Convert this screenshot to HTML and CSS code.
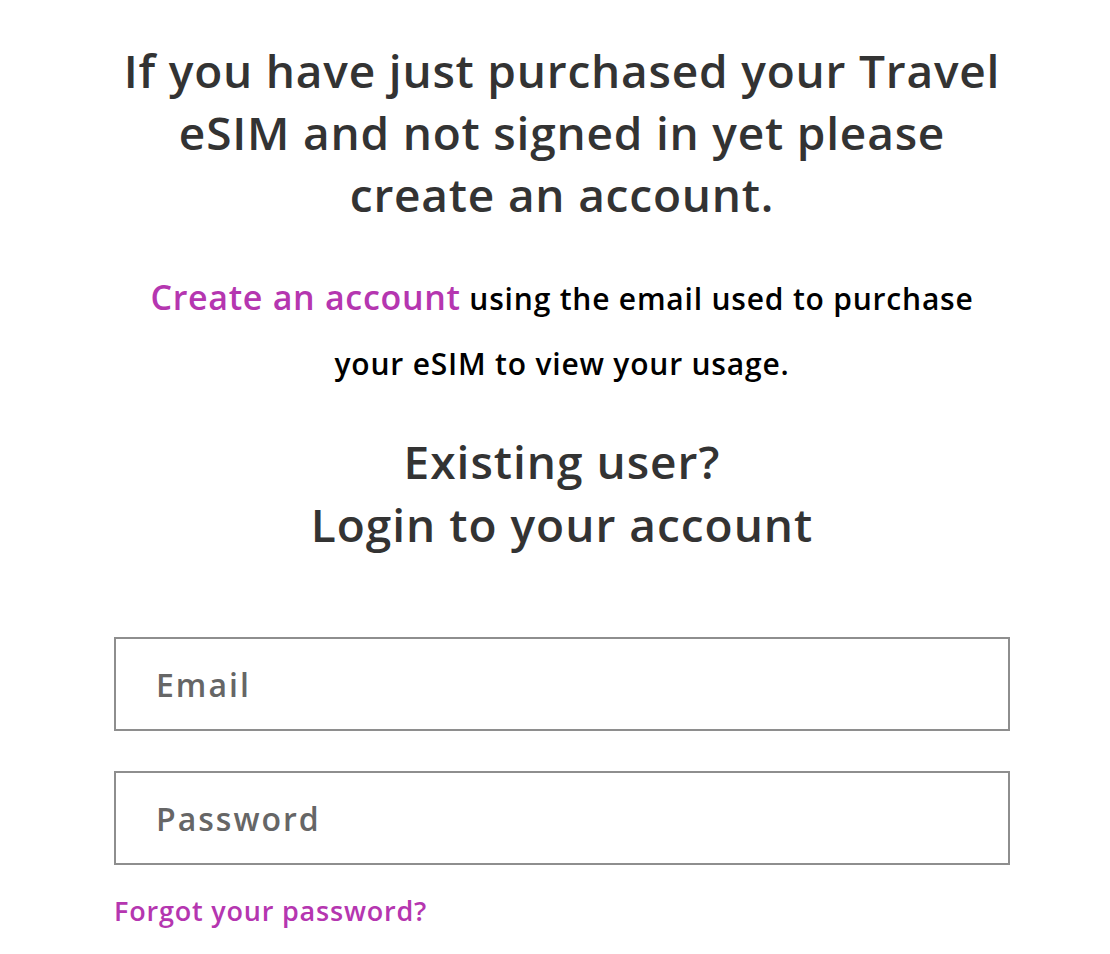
FILE: index.html
```html
<!DOCTYPE html>
<html lang="en">
<head>
  <meta charset="UTF-8">
  <meta name="viewport" content="width=device-width, initial-scale=1.0">
  <title>Login</title>
  <link rel="stylesheet" href="styles.css">
</head>
<body>
  <div class="login">
    <h2 class="intro">If you have just purchased your Travel eSIM and not signed in yet please create an account.</h2>
    <p class="note"><a href="#" class="create">Create an account</a> using the email used to purchase your eSIM to view your usage.</p>
    <h2 class="existing">Existing user?<br>Login to your account</h2>
    <form class="form">
      <input type="email" class="field" placeholder="Email">
      <input type="password" class="field" placeholder="Password">
      <a href="#" class="forgot">Forgot your password?</a>
    </form>
  </div>
</body>
</html>
```

FILE: styles.css
```css
body {
  margin: 0;
  font-family: "Open Sans", Lato, sans-serif;
  background-color: #fff;
  color: #333;
}

.login {
  width: 896px;
  margin-left: 114px;
  text-align: center;
}

.intro {
  margin: 39px 0 0;
  font-size: 46px;
  line-height: 62px;
  font-weight: 600;
  letter-spacing: 0.8px;
  color: #333;
}

.note {
  margin: 40px 0 0;
  padding: 0 30px;
  font-size: 30px;
  line-height: 65px;
  font-weight: 600;
  letter-spacing: 0.8px;
  color: #000;
}

.note .create {
  font-size: 34px;
  letter-spacing: 0.7px;
  color: #b536b0;
  text-decoration: none;
}

.existing {
  margin: 34px 0 0;
  font-size: 46px;
  line-height: 63px;
  font-weight: 600;
  letter-spacing: 1px;
  color: #333;
}

.form {
  display: flex;
  flex-direction: column;
  align-items: flex-start;
  margin-top: 81px;
}

.field {
  width: 100%;
  height: 94px;
  box-sizing: border-box;
  margin-bottom: 40px;
  padding: 0 40px;
  border: 2px solid #8e8e8e;
  border-radius: 0;
  font-family: inherit;
  font-size: 32px;
  letter-spacing: 2px;
  color: #333;
  outline: none;
}

.field + .field {
  margin-bottom: 27px;
}

.field::placeholder {
  color: #666;
  font-weight: 600;
}

.forgot {
  font-size: 27px;
  font-weight: 600;
  letter-spacing: 0.8px;
  color: #b536b0;
  text-decoration: none;
}
```
